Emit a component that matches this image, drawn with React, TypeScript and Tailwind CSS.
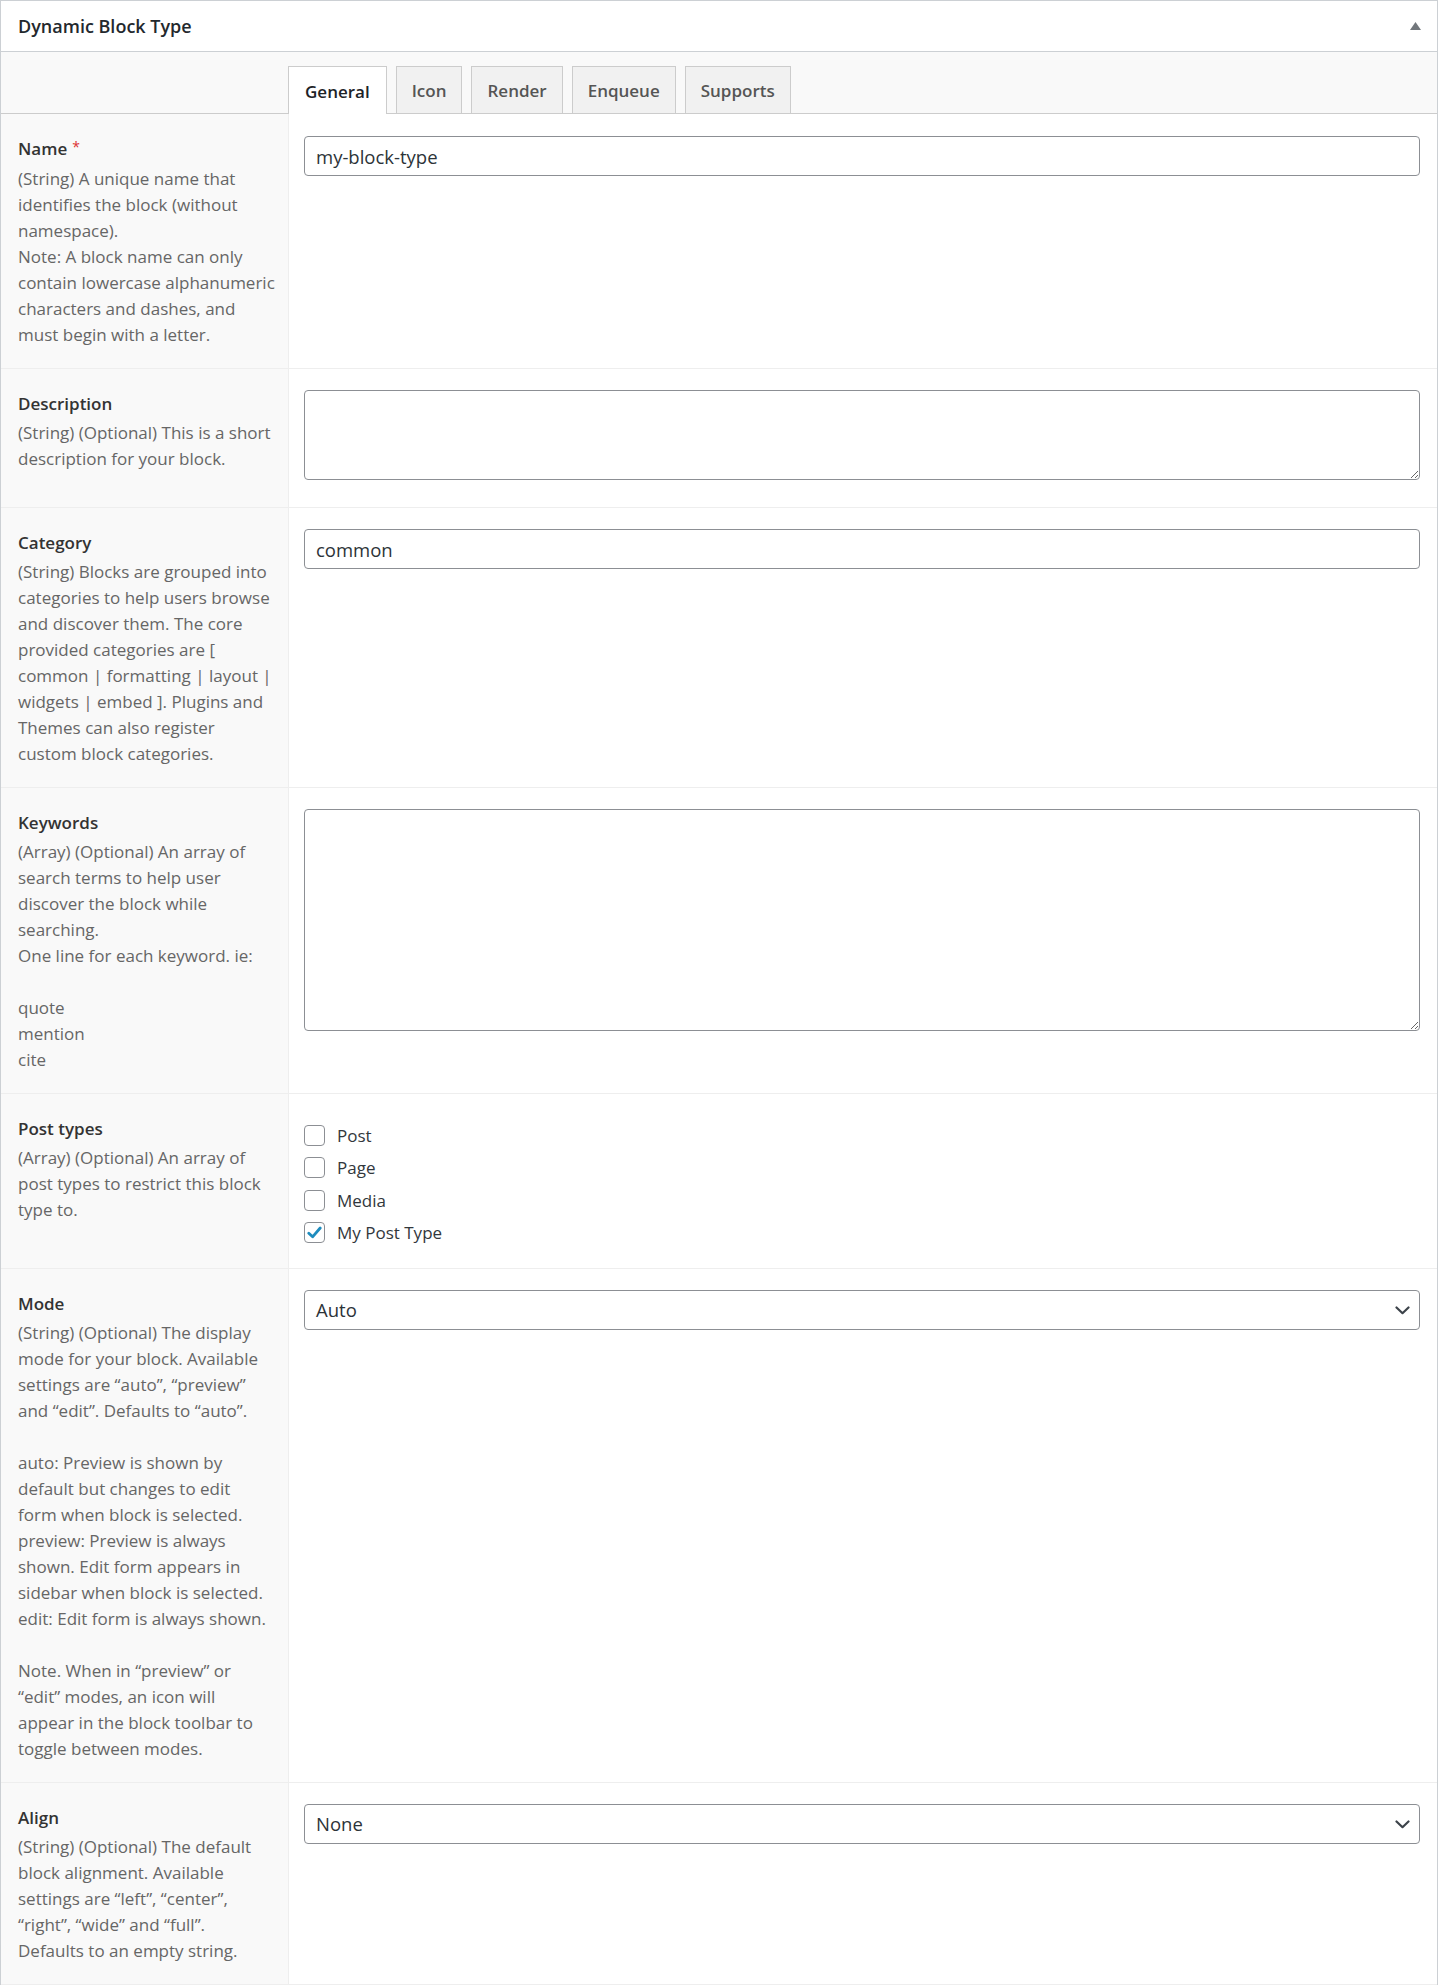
import React from "react";

type Field = {
  label: string;
  required?: boolean;
  lines: string[];
  control: React.ReactNode;
};

const inputCls =
  "block w-full h-[40px] rounded-[4px] border border-[#8c8f94] bg-white px-[11px] text-[18.5px] text-[#2c3338] outline-none";

const Chevron = () => (
  <svg width="15" height="9" viewBox="0 0 15 9" className="text-[#3c434a]">
    <polyline
      points="1.5,1.5 7.5,7.2 13.5,1.5"
      fill="none"
      stroke="currentColor"
      strokeWidth="2.2"
      strokeLinecap="round"
      strokeLinejoin="round"
    />
  </svg>
);

const SelectBox = ({ value }: { value: string }) => (
  <div className="flex h-[40px] w-full items-center justify-between rounded-[4px] border border-[#8c8f94] bg-white pl-[11px] pr-[9px] text-[18.5px] text-[#2c3338]">
    <span>{value}</span>
    <Chevron />
  </div>
);

const Checkbox = ({ label, checked }: { label: string; checked?: boolean }) => (
  <li className="flex h-[32.5px] items-center gap-[12px]">
    <span className="flex h-[21px] w-[21px] items-center justify-center rounded-[4px] border border-[#8c8f94] bg-white">
      {checked && (
        <svg width="15" height="13" viewBox="0 0 15 13">
          <path
            d="M1.8 7.2 L5.6 10.8 L13.2 2"
            fill="none"
            stroke="#1e8cbe"
            strokeWidth="2.8"
            strokeLinecap="round"
            strokeLinejoin="round"
          />
        </svg>
      )}
    </span>
    <span className="text-[17px] text-[#32373c]">{label}</span>
  </li>
);

const fields: Field[] = [
  {
    label: "Name",
    required: true,
    lines: [
      "(String) A unique name that",
      "identifies the block (without",
      "namespace).",
      "Note: A block name can only",
      "contain lowercase alphanumeric",
      "characters and dashes, and",
      "must begin with a letter.",
    ],
    control: (
      <div className="pt-[1px]">
        <input className={inputCls} defaultValue="my-block-type" />
      </div>
    ),
  },
  {
    label: "Description",
    lines: ["(String) (Optional) This is a short", "description for your block."],
    control: (
      <div className="pb-[7px]">
        <textarea className="block h-[90px] w-full rounded-[4px] border border-[#8c8f94] bg-white outline-none" />
      </div>
    ),
  },
  {
    label: "Category",
    lines: [
      "(String) Blocks are grouped into",
      "categories to help users browse",
      "and discover them. The core",
      "provided categories are [",
      "common | formatting | layout |",
      "widgets | embed ]. Plugins and",
      "Themes can also register",
      "custom block categories.",
    ],
    control: <input className={inputCls} defaultValue="common" />,
  },
  {
    label: "Keywords",
    lines: [
      "(Array) (Optional) An array of",
      "search terms to help user",
      "discover the block while",
      "searching.",
      "One line for each keyword. ie:",
      "",
      "quote",
      "mention",
      "cite",
    ],
    control: (
      <textarea className="block h-[222px] w-full rounded-[4px] border border-[#8c8f94] bg-white outline-none" />
    ),
  },
  {
    label: "Post types",
    lines: [
      "(Array) (Optional) An array of",
      "post types to restrict this block",
      "type to.",
    ],
    control: (
      <ul className="-mb-px pt-[4px]">
        <Checkbox label="Post" />
        <Checkbox label="Page" />
        <Checkbox label="Media" />
        <Checkbox label="My Post Type" checked />
      </ul>
    ),
  },
  {
    label: "Mode",
    lines: [
      "(String) (Optional) The display",
      "mode for your block. Available",
      "settings are \u201cauto\u201d, \u201cpreview\u201d",
      "and \u201cedit\u201d. Defaults to \u201cauto\u201d.",
      "",
      "auto: Preview is shown by",
      "default but changes to edit",
      "form when block is selected.",
      "preview: Preview is always",
      "shown. Edit form appears in",
      "sidebar when block is selected.",
      "edit: Edit form is always shown.",
      "",
      "Note. When in \u201cpreview\u201d or",
      "\u201cedit\u201d modes, an icon will",
      "appear in the block toolbar to",
      "toggle between modes.",
    ],
    control: <SelectBox value="Auto" />,
  },
  {
    label: "Align",
    lines: [
      "(String) (Optional) The default",
      "block alignment. Available",
      "settings are \u201cleft\u201d, \u201ccenter\u201d,",
      "\u201cright\u201d, \u201cwide\u201d and \u201cfull\u201d.",
      "Defaults to an empty string.",
    ],
    control: <SelectBox value="None" />,
  },
];

const tabs = ["General", "Icon", "Render", "Enqueue", "Supports"];

export default function App() {
  return (
    <div className="min-h-screen bg-white font-['Open_Sans','Noto_Sans',sans-serif]">
      <div className="border-x border-t border-[#ccd0d4]">
        {/* Header */}
        <div className="flex h-[51px] items-center justify-between border-b border-[#ccd0d4] pl-[17px] pr-[16px]">
          <h2 className="text-[18px] font-semibold text-[#23282d]">Dynamic Block Type</h2>
          <svg width="11" height="8" viewBox="0 0 11 8">
            <polygon points="5.5,0 11,8 0,8" fill="#72777c" />
          </svg>
        </div>

        {/* Tabs */}
        <div className="flex h-[62px] items-end gap-[9px] border-b border-[#cccccc] bg-[#f9f9f9] pl-[287px]">
          {tabs.map((t, i) =>
            i === 0 ? (
              <div
                key={t}
                className="-mb-px flex h-[48px] items-center border border-b-0 border-[#cccccc] bg-white px-[16px] pt-[2px] text-[17px] font-semibold text-[#1d2327]"
              >
                {t}
              </div>
            ) : (
              <div
                key={t}
                className="flex h-[47px] items-center border border-b-0 border-[#cccccc] bg-[#f1f1f1] px-[15px] pt-[2px] text-[17px] font-semibold text-[#555555]"
              >
                {t}
              </div>
            )
          )}
        </div>

        {/* Fields */}
        {fields.map((f) => (
          <div key={f.label} className="grid grid-cols-[288px_1fr] border-b border-[#eeeeee]">
            <div className="border-r border-[#eeeeee] bg-[#f9f9f9] pb-[20px] pl-[17px] pr-[10px] pt-[22px]">
              <div className="mb-[3px] text-[17px] font-semibold leading-[26px] text-[#333333]">
                {f.label}
                {f.required && (
                  <span className="relative -top-[3px] ml-[5px] text-[14px] font-normal text-[#dc3232]">*</span>
                )}
              </div>
              {f.lines.map((l, i) => (
                <span key={i} className="block h-[26px] whitespace-nowrap text-[17px] leading-[26px] text-[#666666]">
                  {l}
                </span>
              ))}
            </div>
            <div className="pb-[20px] pl-[15px] pr-[17px] pt-[21px]">{f.control}</div>
          </div>
        ))}
      </div>
    </div>
  );
}
